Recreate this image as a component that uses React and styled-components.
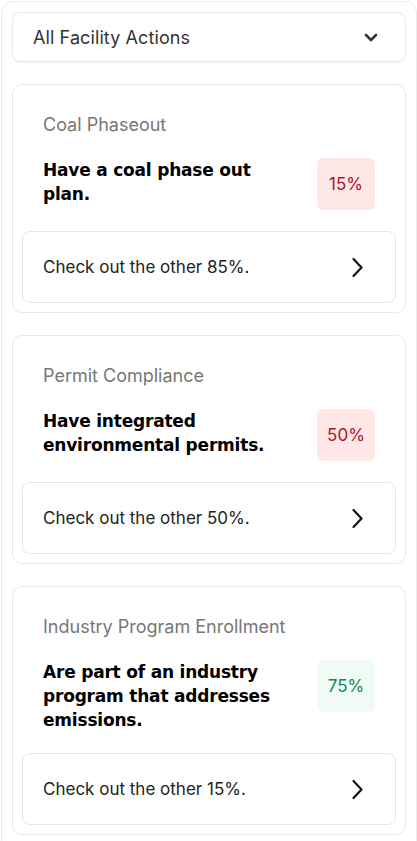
import React from "react";
import styled, { createGlobalStyle } from "styled-components";

const Global = createGlobalStyle`
  html, body { margin: 0; padding: 0; background: #fff; }
  body { font-family: Inter, "Noto Sans", sans-serif; }
`;

const actions = [
  {
    title: "Coal Phaseout",
    text: "Have a coal phase out plan.",
    value: 15,
    good: false,
  },
  {
    title: "Permit Compliance",
    text: "Have integrated environmental permits.",
    value: 50,
    good: false,
  },
  {
    title: "Industry Program Enrollment",
    text: "Are part of an industry program that addresses emissions.",
    value: 75,
    good: true,
    other: 15,
  },
];

const Chevron = ({ dir }) =>
  dir === "down" ? (
    <svg width="14" height="9" viewBox="0 0 14 9" fill="none">
      <polyline points="2,2 7,7 12,2" stroke="#333" strokeWidth="2.6" strokeLinecap="round" strokeLinejoin="round" />
    </svg>
  ) : (
    <svg width="13" height="21" viewBox="0 0 13 21" fill="none">
      <polyline points="2.5,2 10.5,10.5 2.5,19" stroke="#111" strokeWidth="2.2" strokeLinecap="round" strokeLinejoin="round" />
    </svg>
  );

const App = () => {
  return (
    <>
      <Global />
      <Panel>
        <Select>
          <span>All Facility Actions</span>
          <Chevron dir="down" />
        </Select>
        {actions.map((a) => (
          <Card key={a.title}>
            <Body>
              <Title>{a.title}</Title>
              <Row>
                <Heading>{a.text}</Heading>
                <Badge $good={a.good}>{a.value}%</Badge>
              </Row>
            </Body>
            <LinkBox>
              <span>Check out the other {a.other ?? 100 - a.value}%.</span>
              <Chevron />
            </LinkBox>
          </Card>
        ))}
      </Panel>
    </>
  );
};
export default App;

const Panel = styled.div`
  margin: 1px 0 0 1px;
  width: 394px;
  padding: 10px 10px 16px;
  border: 1px solid #ececec;
  border-radius: 12px;
  display: flex;
  flex-direction: column;
  gap: 22px;
`;

const Select = styled.div`
  height: 50px;
  box-sizing: border-box;
  padding: 0 27px 0 20px;
  border: 1px solid #e8e8e8;
  border-radius: 8px;
  box-shadow: 0 1px 2px rgba(0, 0, 0, 0.04);
  display: flex;
  align-items: center;
  justify-content: space-between;
  font-size: 18px;
  letter-spacing: 0.1px;
  color: #333;
`;

const Card = styled.div`
  border: 1px solid #e8e8e8;
  border-radius: 10px;
  padding: 10px 9px 9px;
  display: flex;
  flex-direction: column;
  gap: 21px;
`;

const Body = styled.div`
  padding: 18px 21px 0;
  display: flex;
  flex-direction: column;
  gap: 21px;
`;

const Title = styled.div`
  font-size: 18px;
  line-height: 24px;
  color: #777;
`;

const Row = styled.div`
  display: flex;
  justify-content: space-between;
  align-items: flex-start;
  gap: 16px;
`;

const Heading = styled.div`
  max-width: 240px;
  font-family: "DejaVu Sans", Inter, sans-serif;
  font-size: 17px;
  line-height: 24px;
  font-weight: 700;
  letter-spacing: -0.2px;
  color: #000;
`;

const Badge = styled.div`
  flex: none;
  width: 58px;
  height: 52px;
  border-radius: 6px;
  display: flex;
  align-items: center;
  justify-content: center;
  font-size: 17px;
  background: ${(p) => (p.$good ? "#effbf4" : "#fde7e7")};
  color: ${(p) => (p.$good ? "#17855a" : "#b3141c")};
`;

const LinkBox = styled.div`
  height: 72px;
  box-sizing: border-box;
  border: 1px solid #e6e6e6;
  border-radius: 8px;
  padding: 0 31px 0 20px;
  display: flex;
  align-items: center;
  justify-content: space-between;
  font-size: 17px;
  color: #222;
`;
